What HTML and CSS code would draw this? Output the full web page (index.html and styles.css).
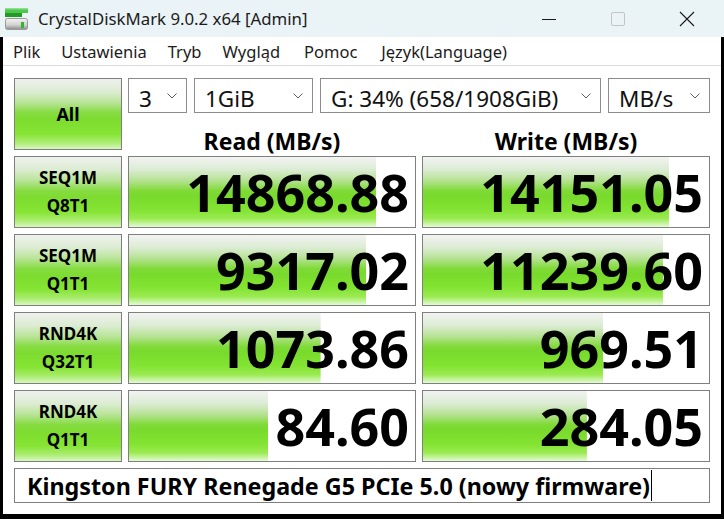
FILE: index.html
```html
<!DOCTYPE html>
<html lang="pl">
<head>
  <meta charset="UTF-8" />
  <title>CrystalDiskMark 9.0.2 x64 [Admin]</title>
  <link rel="stylesheet" href="styles.css">
</head>
<body>
<div class="window">

  <div class="titlebar">
    <svg class="app-icon" width="24" height="24" viewBox="0 0 24 24">
      <defs>
        <linearGradient id="drive" x1="0" y1="0" x2="0" y2="1">
          <stop offset="0" stop-color="#f4f4f4"/>
          <stop offset="0.6" stop-color="#d0d0d0"/>
          <stop offset="1" stop-color="#8a8a8a"/>
        </linearGradient>
      </defs>
      <rect x="0" y="1" width="23" height="5" fill="#4cc84c"/>
      <rect x="0" y="1" width="23" height="1.5" fill="#8ee08e"/>
      <rect x="0" y="6" width="17" height="4" fill="#249a24"/>
      <rect x="0.5" y="11.5" width="22" height="11" rx="2" fill="url(#drive)" stroke="#9a9a9a"/>
      <rect x="16" y="15" width="3" height="6" fill="#2fb82f"/>
    </svg>
    <span class="title">CrystalDiskMark 9.0.2 x64 [Admin]</span>
    <div class="controls">
      <div class="ctl">
        <svg width="16" height="16" viewBox="0 0 16 16"><line x1="1" y1="8.5" x2="15" y2="8.5" stroke="#1a1a1a" stroke-width="1"/></svg>
      </div>
      <div class="ctl">
        <svg width="16" height="16" viewBox="0 0 16 16"><rect x="1.5" y="1.5" width="13" height="13" rx="1.5" fill="none" stroke="#c4c4c4" stroke-width="1"/></svg>
      </div>
      <div class="ctl">
        <svg width="16" height="16" viewBox="0 0 16 16"><path d="M1 1 L15 15 M15 1 L1 15" stroke="#1a1a1a" stroke-width="1.1"/></svg>
      </div>
    </div>
  </div>

  <div class="frame">
    <div class="menubar">
      <span>Plik</span>
      <span>Ustawienia</span>
      <span>Tryb</span>
      <span>Wygląd</span>
      <span>Pomoc</span>
      <span>Język(Language)</span>
    </div>

    <div class="client">
      <div class="grid">
        <div class="btn all">All</div>

        <div class="top">
          <div class="selects">
            <div class="combo w-count"><span>3</span><svg width="10" height="6" viewBox="0 0 10 6"><polyline points="0.5,0.5 5,5 9.5,0.5" fill="none" stroke="#5a5a5a"/></svg></div>
            <div class="combo w-size"><span>1GiB</span><svg width="10" height="6" viewBox="0 0 10 6"><polyline points="0.5,0.5 5,5 9.5,0.5" fill="none" stroke="#5a5a5a"/></svg></div>
            <div class="combo w-drive"><span>G: 34% (658/1908GiB)</span><svg width="10" height="6" viewBox="0 0 10 6"><polyline points="0.5,0.5 5,5 9.5,0.5" fill="none" stroke="#5a5a5a"/></svg></div>
            <div class="combo w-unit"><span>MB/s</span><svg width="10" height="6" viewBox="0 0 10 6"><polyline points="0.5,0.5 5,5 9.5,0.5" fill="none" stroke="#5a5a5a"/></svg></div>
          </div>
          <div class="heads">
            <div class="head">Read (MB/s)</div>
            <div class="head">Write (MB/s)</div>
          </div>
        </div>

        <div class="btn">SEQ1M<br>Q8T1</div>
        <div class="bar" style="--fill: 86.4%">14868.88</div>
        <div class="bar" style="--fill: 86%">14151.05</div>

        <div class="btn">SEQ1M<br>Q1T1</div>
        <div class="bar" style="--fill: 82.9%">9317.02</div>
        <div class="bar" style="--fill: 83.9%">11239.60</div>

        <div class="btn">RND4K<br>Q32T1</div>
        <div class="bar" style="--fill: 67%">1073.86</div>
        <div class="bar" style="--fill: 63%">969.51</div>

        <div class="btn">RND4K<br>Q1T1</div>
        <div class="bar" style="--fill: 48.6%">84.60</div>
        <div class="bar" style="--fill: 57.3%">284.05</div>

        <div class="comment">Kingston FURY Renegade G5 PCIe 5.0 (nowy firmware)<span class="caret"></span></div>
      </div>
    </div>
  </div>

</div>
</body>
</html>
```

FILE: styles.css
```css
body {
  margin: 0;
  background: #000;
  font-family: "Noto Sans", "Open Sans", sans-serif;
  color: #000;
}
.window {
  width: 724px;
  height: 519px;
  display: flex;
  flex-direction: column;
  background: #000;
}
.titlebar {
  height: 37px;
  background: #eaf3f6;
  display: flex;
  align-items: center;
  flex-shrink: 0;
}
.app-icon {
  margin-left: 5px;
  margin-top: 1px;
}
.title {
  margin-left: 9px;
  font-size: 16.8px;
  color: #1b1b1b;
}
.controls {
  margin-left: auto;
  margin-right: 3px;
  display: flex;
}
.ctl {
  width: 69px;
  height: 37px;
  display: flex;
  align-items: center;
  justify-content: center;
}
.frame {
  flex: 1;
  margin: 0 3px 5px;
  background: #fff;
  display: flex;
  flex-direction: column;
}
.menubar {
  height: 29px;
  border-bottom: 1px solid #dcdcdc;
  display: flex;
  align-items: center;
  font-size: 16.5px;
  color: #1b1b1b;
  padding: 1px 0 0 10px;
  box-sizing: border-box;
}
.menubar span {
  margin-right: 21px;
}
.menubar span:nth-child(4),
.menubar span:nth-child(5) {
  margin-right: 24px;
}
.client {
  padding: 12px 0 0 11px;
}
.grid {
  display: grid;
  grid-template-columns: 108px 288px 288px;
  grid-template-rows: 72px 72px 72px 72px 72px 35px;
  gap: 6px;
}
.btn, .bar {
  border: 1px solid #7f7f7f;
  box-sizing: border-box;
}
.btn {
  background: linear-gradient(to bottom, #eef1ec 0%, #dcecd2 18%, #b8e496 34%, #86dc42 48%, #7edc30 58%, #86e434 78%, #a8ec6c 90%, #d8f6c0 100%);
  display: flex;
  align-items: center;
  justify-content: center;
  text-align: center;
  font-weight: bold;
  font-size: 17px;
  line-height: 28px;
}
.all {
  font-size: 18px;
}
.top {
  grid-column: 2 / 4;
  display: flex;
  flex-direction: column;
}
.selects {
  display: flex;
  gap: 7px;
  height: 35px;
}
.combo {
  border: 1px solid #8c8c8c;
  box-sizing: border-box;
  display: flex;
  align-items: center;
  justify-content: space-between;
  padding: 0 9px 0 10px;
  font-size: 22.5px;
  color: #111;
}
.combo span {
  padding-top: 5px;
}
.w-count { width: 59px; }
.w-size { width: 119px; }
.w-drive { width: 281px; }
.w-unit { width: 102px; }
.heads {
  flex: 1;
  display: grid;
  grid-template-columns: 288px 288px;
  gap: 6px;
}
.head {
  display: flex;
  align-items: center;
  justify-content: center;
  font-weight: bold;
  font-size: 23px;
  padding-top: 12px;
}
.bar {
  background: linear-gradient(to bottom, #f2f3f2 0%, #dcecd4 18%, #b4e290 34%, #80da38 48%, #78da2c 56%, #84e432 76%, #9aea52 88%, #d2f6b4 97%, #e6fad8 100%) 0 0 / var(--fill) 100% no-repeat, #fff;
  display: flex;
  align-items: center;
  justify-content: flex-end;
  padding-right: 6px;
  font-weight: bold;
  font-size: 52px;
  line-height: 1;
}
.comment {
  grid-column: 1 / 4;
  border: 1px solid #7f7f7f;
  box-sizing: border-box;
  display: flex;
  align-items: center;
  padding-left: 12px;
  font-weight: bold;
  font-size: 23.3px;
}
.caret {
  width: 1px;
  height: 31px;
  background: #000;
  margin-left: 1px;
}
```
